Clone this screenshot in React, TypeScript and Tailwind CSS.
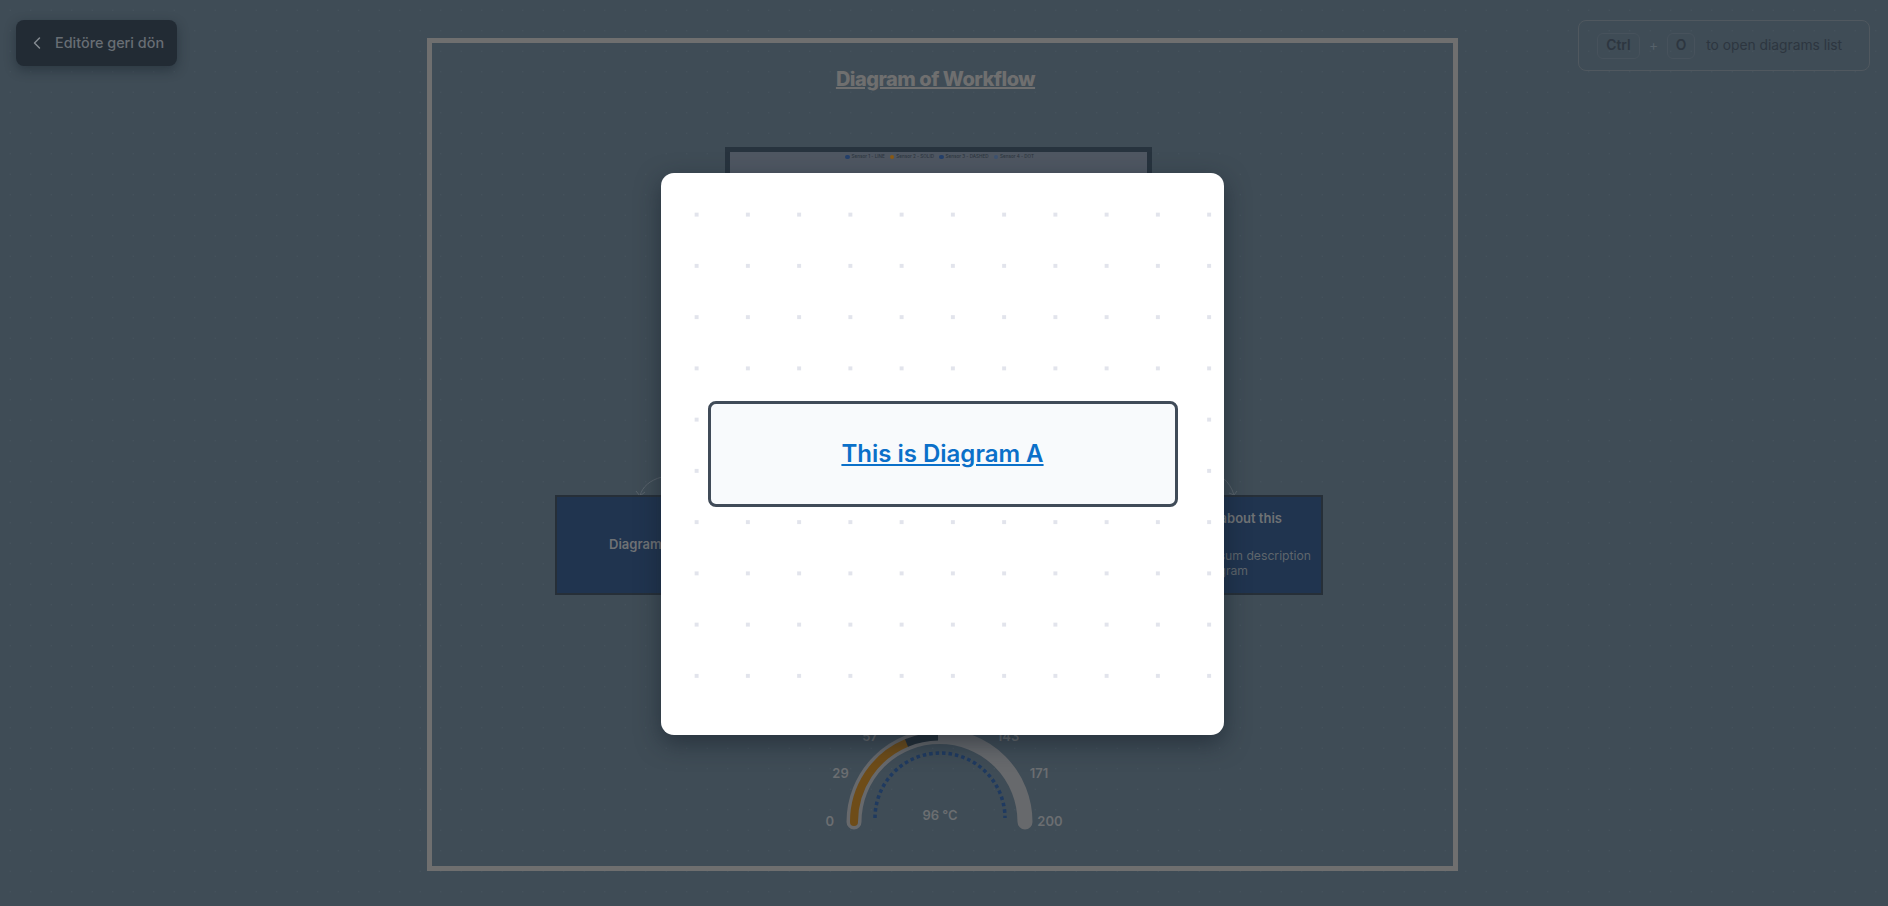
import { ChevronLeft } from "lucide-react";

const legend = [
  { label: "Sensor 1 - LINE", color: "bg-[#24406b]" },
  { label: "Sensor 2 - SOLID", color: "bg-[#8a5a14]" },
  { label: "Sensor 3 - DASHED", color: "bg-[#24406b]" },
  { label: "Sensor 4 - DOT", color: "bg-[#3d5270]" },
];

function Gauge() {
  return (
    <svg className="absolute left-[388px] top-[674px]" width="260" height="130" viewBox="0 0 260 130">
      <path d="M34 105 A85.5 85.5 0 0 1 205 105" fill="none" stroke="#67696c" strokeWidth="15" strokeLinecap="round" />
      <path d="M34 105 A85.5 85.5 0 0 1 86.5 26" fill="none" stroke="#6e4c18" strokeWidth="8" strokeLinecap="round" />
      <path d="M86.5 26 A85.5 85.5 0 0 1 118 19.5" fill="none" stroke="#222d36" strokeWidth="8" />
      <path d="M55 101 A65 65 0 0 1 185 101" fill="none" stroke="#1f3a60" strokeWidth="3.5" strokeDasharray="3.5 3" />
      <g fill="#6b6e71" fontSize="13" fontWeight="600" fontFamily="Inter, sans-serif" textAnchor="middle">
        <text x="9.7" y="109">0</text>
        <text x="20.5" y="61">29</text>
        <text x="50" y="24">57</text>
        <text x="188" y="24">143</text>
        <text x="219" y="61">171</text>
        <text x="230" y="109">200</text>
        <text x="120" y="103">96 °C</text>
      </g>
    </svg>
  );
}

export default function App() {
  return (
    <div className="relative h-screen overflow-hidden bg-[#3f4c56] bg-[radial-gradient(#4a5660_0.8px,transparent_0.8px)] bg-[length:20.5px_20.5px] font-['Inter',sans-serif]">
      <button className="absolute left-4 top-5 z-10 flex h-[46px] w-[161px] items-center gap-[8px] rounded-lg bg-[#222b34] pl-[11px] text-[14.4px] font-medium text-[#686e74] shadow-[0_4px_12px_rgba(20,30,40,0.45)]">
        <ChevronLeft className="h-5 w-5 text-[#858b91]" strokeWidth={1.75} />
        Editöre geri dön
      </button>

      <div className="absolute right-[18px] top-5 z-10 flex h-[51px] w-[292px] items-center rounded-lg border border-[#50585f] pl-[18px] text-[13.8px] text-[#2d3640]">
        <kbd className="flex h-[26px] w-[43px] items-center justify-center rounded-md border border-[#47525c] font-['Inter',sans-serif] font-semibold">
          Ctrl
        </kbd>
        <span className="mx-[9px] text-[#56616a]">+</span>
        <kbd className="flex h-[26px] w-[28px] items-center justify-center rounded-md border border-[#47525c] font-['Inter',sans-serif] font-semibold">
          O
        </kbd>
        <span className="ml-[11px]">to open diagrams list</span>
      </div>

      {/* diagram canvas */}
      <div className="absolute left-[427px] top-[38px] h-[833px] w-[1031px] border-[5px] border-[#6f6f6f]">
        <h1 className="mt-[22px] pr-[14px] text-center text-xl font-extrabold tracking-[-0.5px] text-[#6f6f6f] underline">
          Diagram of Workflow
        </h1>

        <div className="absolute left-[293px] top-[104px] h-[300px] w-[427px] border-[5px] border-[#27333e] bg-[#4f5762]">
          <div className="mt-[1px] flex justify-center gap-[5px] pl-[2px] text-[4.6px] font-medium leading-[8px] text-[#2d3640]">
            {legend.map((item) => (
              <div key={item.label} className="flex items-center gap-[2px]">
                <span className={`h-[4.5px] w-[4.5px] rounded-full ${item.color}`} />
                {item.label}
              </div>
            ))}
          </div>
          <div className="mt-[11px] flex items-center text-[5px] text-[#2d3640]">
            <span className="pl-[3px] pr-[1px]">100</span>
            <div className="flex-1 border-t border-dotted border-[#3f4852]" />
          </div>
        </div>

        <svg className="absolute left-[200px] top-[420px]" width="40" height="40" fill="none" stroke="#59636b" strokeWidth="1">
          <path d="M8 33 C10 24 18 17 30 14" />
          <path d="M4 28 L8 33 L13 29" />
        </svg>
        <svg className="absolute left-[790px] top-[425px]" width="20" height="30" fill="none" stroke="#59636b" strokeWidth="1">
          <path d="M12 27 C10 20 6 14 1 10" />
          <path d="M7 25 L12 27 L15 23" />
        </svg>

        <div className="absolute left-[123px] top-[452px] flex h-[100px] w-[210px] items-center border-2 border-[#262f38] bg-[#20344f] pl-[52px] text-[13px] font-semibold text-[#6f7275]">
          Diagram A
        </div>

        <div className="absolute left-[680px] top-[452px] flex h-[100px] w-[211px] flex-col border-2 border-[#262f38] bg-[#20344f] pt-[12px] text-right text-[12.2px] text-[#5f666c]">
          <p className="mr-[39px] text-[13px] font-semibold leading-[18px] text-[#6f7275]">More about this</p>
          <p className="mr-[10px] mt-[21px] leading-[15px]">Lorem ipsum description</p>
          <p className="mr-[73px] leading-[15px]">this diagram</p>
        </div>

        <Gauge />
      </div>

      {/* modal */}
      <div className="absolute inset-0 z-20 flex items-center justify-center pr-[3px] pt-[2px]">
        <div className="relative flex h-[562px] w-[563px] items-center justify-center overflow-hidden rounded-[13px] bg-white shadow-[0_8px_24px_rgba(20,30,40,0.55)]">
          <div className="absolute inset-x-0 top-0 h-[512px] bg-[radial-gradient(#e2e4ec_2.2px,transparent_2.2px)] bg-[length:51.25px_51.25px] bg-[position:10px_16px]" />
          <div className="relative -mt-[1px] flex h-[106px] w-[470px] items-center justify-center rounded-lg border-[3px] border-[#404b58] bg-[#f8fafc]">
            <a className="text-2xl font-semibold text-[#0b70c9] underline">This is Diagram A</a>
          </div>
        </div>
      </div>
    </div>
  );
}
